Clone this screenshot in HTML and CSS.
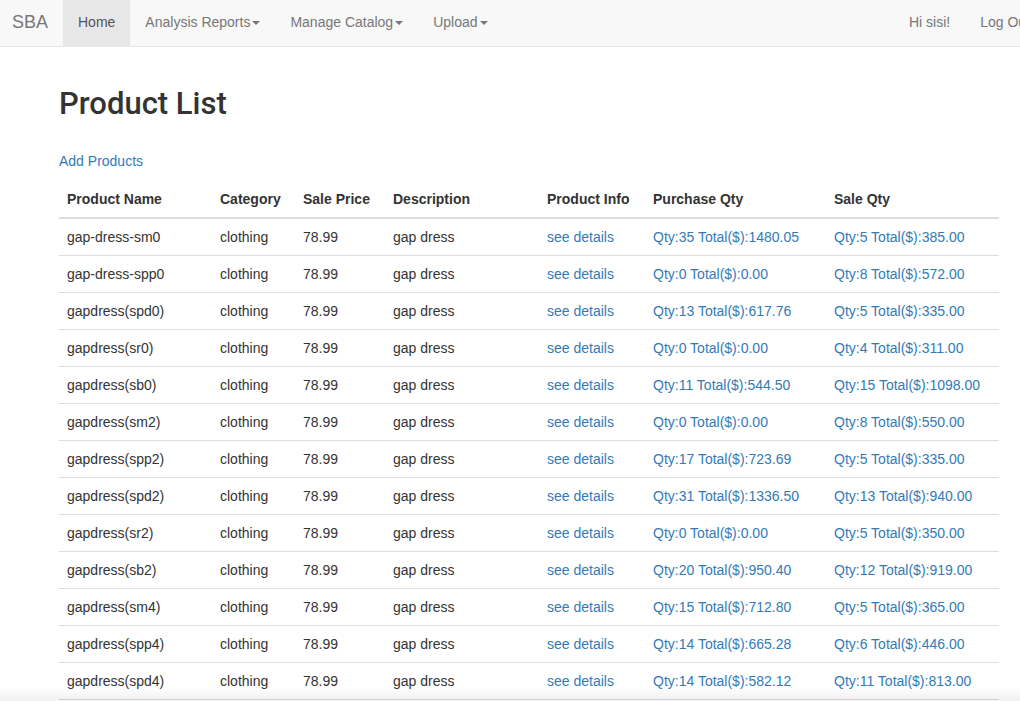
FILE: index.html
```html
<!DOCTYPE html>
<html>
<head>
<meta charset="utf-8">
<title>Product List</title>
<link rel="stylesheet" href="styles.css">
</head>
<body>
<nav class="navbar">
  <div class="navbar-inner">
    <a class="brand" href="#">SBA</a>
    <ul class="nav">
      <li class="active"><a href="#">Home</a></li>
      <li><a href="#">Analysis Reports<span class="caret"></span></a></li>
      <li><a href="#">Manage Catalog<span class="caret"></span></a></li>
      <li><a href="#">Upload<span class="caret"></span></a></li>
    </ul>
    <ul class="nav nav-right">
      <li><a href="#">Hi sisi!</a></li>
      <li><a href="#">Log Out</a></li>
    </ul>
  </div>
</nav>
<main class="container">
  <h1 class="title">Product List</h1>
  <p class="add"><a href="#">Add Products</a></p>
  <table class="table">
    <thead>
      <tr>
        <th class="c1">Product Name</th>
        <th class="c2">Category</th>
        <th class="c3">Sale Price</th>
        <th class="c4">Description</th>
        <th class="c5">Product Info</th>
        <th class="c6">Purchase Qty</th>
        <th class="c7">Sale Qty</th>
      </tr>
    </thead>
    <tbody>
      <tr><td>gap-dress-sm0</td><td>clothing</td><td>78.99</td><td>gap dress</td><td><a href="#">see details</a></td><td><a href="#">Qty:35 Total($):1480.05</a></td><td><a href="#">Qty:5 Total($):385.00</a></td></tr>
      <tr><td>gap-dress-spp0</td><td>clothing</td><td>78.99</td><td>gap dress</td><td><a href="#">see details</a></td><td><a href="#">Qty:0 Total($):0.00</a></td><td><a href="#">Qty:8 Total($):572.00</a></td></tr>
      <tr><td>gapdress(spd0)</td><td>clothing</td><td>78.99</td><td>gap dress</td><td><a href="#">see details</a></td><td><a href="#">Qty:13 Total($):617.76</a></td><td><a href="#">Qty:5 Total($):335.00</a></td></tr>
      <tr><td>gapdress(sr0)</td><td>clothing</td><td>78.99</td><td>gap dress</td><td><a href="#">see details</a></td><td><a href="#">Qty:0 Total($):0.00</a></td><td><a href="#">Qty:4 Total($):311.00</a></td></tr>
      <tr><td>gapdress(sb0)</td><td>clothing</td><td>78.99</td><td>gap dress</td><td><a href="#">see details</a></td><td><a href="#">Qty:11 Total($):544.50</a></td><td><a href="#">Qty:15 Total($):1098.00</a></td></tr>
      <tr><td>gapdress(sm2)</td><td>clothing</td><td>78.99</td><td>gap dress</td><td><a href="#">see details</a></td><td><a href="#">Qty:0 Total($):0.00</a></td><td><a href="#">Qty:8 Total($):550.00</a></td></tr>
      <tr><td>gapdress(spp2)</td><td>clothing</td><td>78.99</td><td>gap dress</td><td><a href="#">see details</a></td><td><a href="#">Qty:17 Total($):723.69</a></td><td><a href="#">Qty:5 Total($):335.00</a></td></tr>
      <tr><td>gapdress(spd2)</td><td>clothing</td><td>78.99</td><td>gap dress</td><td><a href="#">see details</a></td><td><a href="#">Qty:31 Total($):1336.50</a></td><td><a href="#">Qty:13 Total($):940.00</a></td></tr>
      <tr><td>gapdress(sr2)</td><td>clothing</td><td>78.99</td><td>gap dress</td><td><a href="#">see details</a></td><td><a href="#">Qty:0 Total($):0.00</a></td><td><a href="#">Qty:5 Total($):350.00</a></td></tr>
      <tr><td>gapdress(sb2)</td><td>clothing</td><td>78.99</td><td>gap dress</td><td><a href="#">see details</a></td><td><a href="#">Qty:20 Total($):950.40</a></td><td><a href="#">Qty:12 Total($):919.00</a></td></tr>
      <tr><td>gapdress(sm4)</td><td>clothing</td><td>78.99</td><td>gap dress</td><td><a href="#">see details</a></td><td><a href="#">Qty:15 Total($):712.80</a></td><td><a href="#">Qty:5 Total($):365.00</a></td></tr>
      <tr><td>gapdress(spp4)</td><td>clothing</td><td>78.99</td><td>gap dress</td><td><a href="#">see details</a></td><td><a href="#">Qty:14 Total($):665.28</a></td><td><a href="#">Qty:6 Total($):446.00</a></td></tr>
      <tr><td>gapdress(spd4)</td><td>clothing</td><td>78.99</td><td>gap dress</td><td><a href="#">see details</a></td><td><a href="#">Qty:14 Total($):582.12</a></td><td><a href="#">Qty:11 Total($):813.00</a></td></tr>
    </tbody>
  </table>
</main>
<div class="edge-shadow"></div>
</body>
</html>
```

FILE: styles.css
```css
html, body {
  margin: 0;
  padding: 0;
  overflow: hidden;
  height: 701px;
}
body {
  font-family: "Liberation Sans", Arial, Helvetica, sans-serif;
  font-size: 14px;
  line-height: 20px;
  color: #333;
  background: #fff;
  position: relative;
}
a {
  color: #337ab7;
  text-decoration: none;
}
.navbar {
  background: #f8f8f8;
  border-bottom: 1px solid #e7e7e7;
  height: 46px;
}
.navbar-inner {
  display: flex;
  width: 1045px;
  height: 46px;
}
.brand {
  display: block;
  color: #777;
  font-size: 18px;
  line-height: 44px;
  padding: 0 15px 0 12px;
  width: 36px;
}
.nav {
  display: flex;
  list-style: none;
  margin: 0;
  padding: 0;
}
.nav li a {
  display: flex;
  align-items: center;
  height: 44px;
  padding: 0 15px 2px;
  color: #777;
}
.nav li.active a {
  background: #e7e7e7;
  color: #555;
}
.nav-right {
  margin-left: auto;
}
.caret {
  display: inline-block;
  width: 0;
  height: 0;
  margin-left: 2px;
  margin-top: 1px;
  border-top: 4px solid #777;
  border-left: 4px solid transparent;
  border-right: 4px solid transparent;
}
.container {
  margin-left: 59px;
  width: 940px;
}
.title {
  font-family: Roboto, "Liberation Sans", Arial, sans-serif;
  font-size: 31px;
  font-weight: 500;
  line-height: 40px;
  margin: 37px 0 0;
  color: #333;
}
.add {
  margin: 27px 0 10px;
}
.table {
  width: 940px;
  border-collapse: collapse;
  border-spacing: 0;
}
.table th,
.table td {
  text-align: left;
  padding: 8px;
  line-height: 20px;
  white-space: nowrap;
}
.table th {
  font-weight: bold;
  border-bottom: 2px solid #ddd;
}
.table td {
  border-top: 1px solid #ddd;
}
.table tbody tr:first-child td {
  border-top: 0;
}
.table tbody tr:last-child td {
  border-bottom: 1px solid #ddd;
}
.c1 { width: 137px; }
.c2 { width: 67px; }
.c3 { width: 74px; }
.c4 { width: 138px; }
.c5 { width: 90px; }
.c6 { width: 165px; }
.c7 { width: 157px; }
.edge-shadow {
  position: absolute;
  left: 0;
  right: 0;
  bottom: 0;
  height: 14px;
  background: linear-gradient(to bottom, rgba(0,0,0,0), rgba(0,0,0,0.06));
  pointer-events: none;
}
```
